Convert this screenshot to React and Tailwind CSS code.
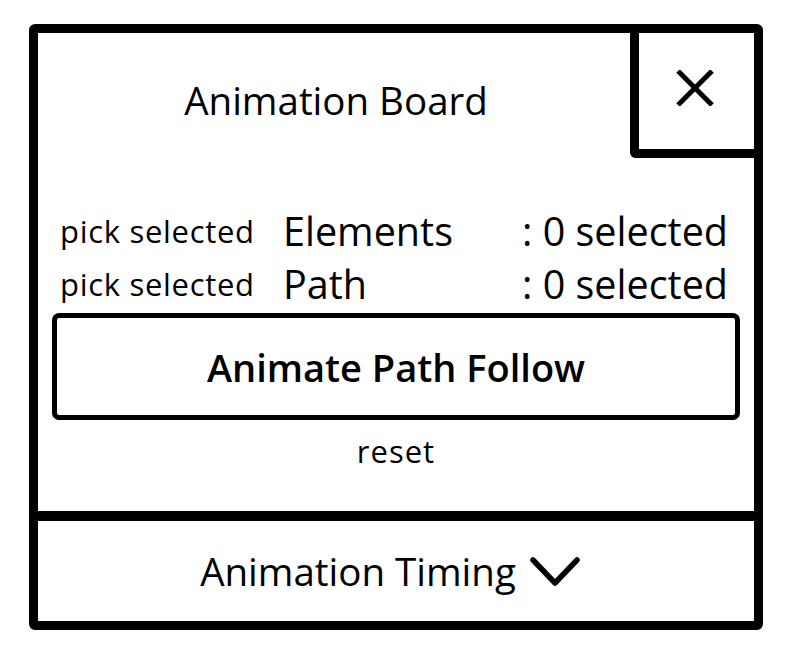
import { useState } from "react"

const font = { fontFamily: '"Open Sans", "Noto Sans", sans-serif' }

const CloseIcon = () => (
  <svg width="38" height="36" viewBox="0 0 38 36" fill="none" stroke="black" strokeWidth="5">
    <line x1="2" y1="1" x2="36" y2="35" />
    <line x1="36" y1="1" x2="2" y2="35" />
  </svg>
)

const Chevron = () => (
  <svg width="50" height="30" viewBox="0 0 50 30" fill="none" stroke="black" strokeWidth="5.5" strokeLinecap="round" strokeLinejoin="round">
    <polyline points="3,3 25,26 47,3" />
  </svg>
)

export default function App() {
  const [open, setOpen] = useState(false)
  const [elements, setElements] = useState(0)
  const [path, setPath] = useState(0)

  return (
    <div className="w-[794px] h-[662px] bg-white text-black" style={font}>
      <div className="ml-[29px] pt-[24px]">
        <div className="w-[734px] border-[9px] border-black rounded-[6px] flex flex-col">
          {/* top part */}
          <div className="h-[478px] flex flex-col">
            <div className="flex h-[125px]">
              <div className="flex-1 flex items-center justify-center pt-[10px] pl-[4px]">
                <span className="text-[38.5px] leading-none">Animation Board</span>
              </div>
              <button className="w-[124px] h-[125px] border-l-[9px] border-b-[9px] border-black rounded-bl-[6px] flex items-center justify-center pb-[6px] pr-[4px]">
                <CloseIcon />
              </button>
            </div>

            <div className="mt-[44px] pl-[22px] pr-[26px]">
              <div className="grid grid-cols-[223px_200px_1fr] items-center h-[53px] whitespace-nowrap">
                <button className="text-left text-[31px] tracking-[0.7px]" onClick={() => setElements(elements)}>pick selected</button>
                <span className="text-[39.5px]">Elements</span>
                <span className="text-[39.5px] text-right">: {elements} selected</span>
              </div>
              <div className="grid grid-cols-[223px_200px_1fr] items-center h-[53px] whitespace-nowrap">
                <button className="text-left text-[31px] tracking-[0.7px]" onClick={() => setPath(path)}>pick selected</button>
                <span className="text-[39.5px]">Path</span>
                <span className="text-[39.5px] text-right">: {path} selected</span>
              </div>
            </div>

            <button className="mx-[14px] mt-[5px] h-[107px] border-[5px] border-black rounded-[7px] text-[38px] font-semibold pt-[2px]">
              Animate Path Follow
            </button>
            <button className="mt-[14px] text-[31px] tracking-[1px] leading-[34px] self-center" onClick={() => { setElements(0); setPath(0) }}>
              reset
            </button>
          </div>

          {/* bottom part */}
          <button
            className="h-[110px] border-t-[10px] border-black flex items-center justify-center gap-[14px] pt-[2px] pr-[12px]"
            onClick={() => setOpen(!open)}
          >
            <span className="text-[38.5px]">Animation Timing</span>
            <Chevron />
          </button>
        </div>
      </div>
    </div>
  )
}
